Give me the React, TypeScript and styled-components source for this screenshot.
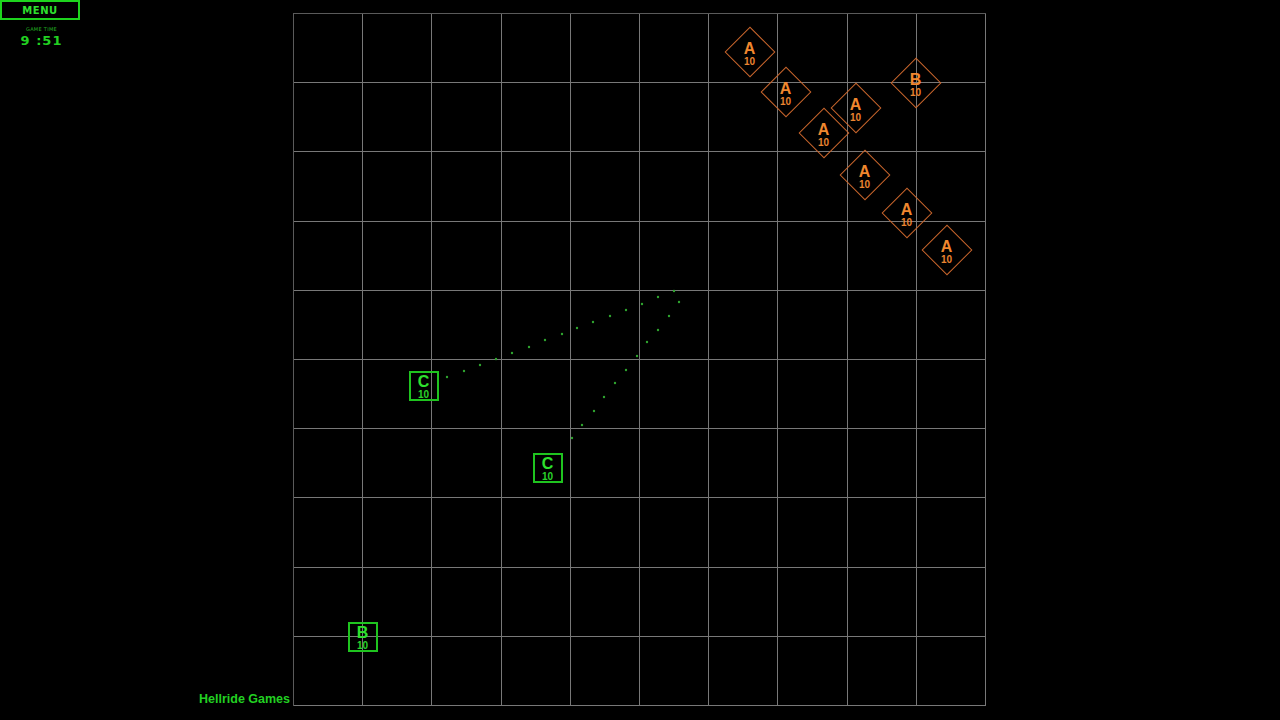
import React from "react";
import styled, { createGlobalStyle } from "styled-components";

const Global = createGlobalStyle`
  html, body { margin: 0; padding: 0; background: #000; }
  body { width: 1280px; height: 720px; overflow: hidden; font-family: "Liberation Sans", Arial, sans-serif; }
`;

const Page = styled.div`
  width: 1280px;
  height: 720px;
  display: flex;
  background: #000;
`;

const SideColumn = styled.div`
  width: 293px;
  display: flex;
  flex-direction: column;
  justify-content: space-between;
  padding-bottom: 14px;
  box-sizing: border-box;
`;

const Hud = styled.div`
  width: 80px;
  display: flex;
  flex-direction: column;
  align-items: center;
`;

const MenuButton = styled.button`
  width: 80px;
  height: 20px;
  box-sizing: border-box;
  border: 2px solid #1ed41e;
  background: #000;
  color: #2fe02f;
  font-family: "DejaVu Sans", sans-serif;
  font-size: 10px;
  font-weight: bold;
  letter-spacing: 0.5px;
  padding: 0;
  line-height: 15px;
  cursor: pointer;
  align-self: flex-start;
`;

const TimeLabel = styled.div`
  margin-top: 6px;
  margin-left: 3px;
  color: #22b022;
  font-size: 5px;
  letter-spacing: 0.3px;
  line-height: 6px;
  font-family: "DejaVu Sans", sans-serif;
`;

const TimeValue = styled.div`
  margin-top: 1px;
  margin-left: 3px;
  color: #22d022;
  font-size: 13px;
  font-weight: bold;
  letter-spacing: 1px;
  font-family: "DejaVu Sans", sans-serif;
`;

const Credit = styled.div`
  align-self: flex-end;
  margin-right: 3px;
  color: #22d022;
  font-size: 12.5px;
  font-weight: bold;
`;

const BoardWrap = styled.div`
  padding-top: 13px;
`;

const Board = styled.div`
  position: relative;
  width: 693px;
  height: 693px;
  box-sizing: border-box;
  border-left: 1.5px solid #5a5a5a;
  border-top: 1.5px solid #5a5a5a;
  display: grid;
  grid-template-columns: repeat(10, 1fr);
  grid-template-rows: repeat(10, 1fr);
`;

const Cell = styled.div`
  border-right: 1.5px solid #787878;
  border-bottom: 1.5px solid #787878;
`;

const Overlay = styled.svg`
  position: absolute;
  left: -1.5px;
  top: -1.5px;
  width: 693px;
  height: 693px;
  pointer-events: none;
`;

const EnemyUnit = styled.div<{ $x: number; $y: number }>`
  position: absolute;
  left: ${(p) => p.$x - 18}px;
  top: ${(p) => p.$y - 18}px;
  width: 36px;
  height: 36px;
  box-sizing: border-box;
  padding-top: 4px;
  display: flex;
  flex-direction: column;
  align-items: center;
  justify-content: center;
  &::before {
    content: "";
    position: absolute;
    inset: 0;
    border: 1.5px solid #c9652c;
    transform: rotate(45deg);
    box-sizing: border-box;
  }
`;

const FriendlyUnit = styled.div<{ $x: number; $y: number }>`
  position: absolute;
  left: ${(p) => p.$x - 15}px;
  top: ${(p) => p.$y - 15}px;
  width: 30px;
  height: 30px;
  box-sizing: border-box;
  padding-top: 3px;
  border: 2px solid #1fc41f;
  display: flex;
  flex-direction: column;
  align-items: center;
  justify-content: center;
`;

const UnitLetter = styled.div<{ $color: string }>`
  color: ${(p) => p.$color};
  font-size: 16px;
  font-weight: bold;
  line-height: 15px;
  position: relative;
`;

const UnitStrength = styled.div<{ $color: string }>`
  color: ${(p) => p.$color};
  font-size: 10px;
  font-weight: bold;
  line-height: 11px;
  position: relative;
`;

const OX = 294.5;
const OY = 14.5;

const enemies = [
  { l: "A", x: 750, y: 52 },
  { l: "A", x: 786, y: 92 },
  { l: "A", x: 856, y: 108 },
  { l: "A", x: 824, y: 133 },
  { l: "B", x: 916, y: 83 },
  { l: "A", x: 865, y: 175 },
  { l: "A", x: 907, y: 213 },
  { l: "A", x: 947, y: 250 },
];

const friends = [
  { l: "C", x: 424, y: 386 },
  { l: "C", x: 548, y: 468 },
  { l: "B", x: 363, y: 637 },
];

const dots: [number, number][] = [
  [447, 377], [464, 371], [480, 365], [496, 359], [512, 353], [529, 347], [545, 340],
  [562, 334], [577, 328], [593, 322], [610, 316], [626, 310], [642, 304], [658, 297], [674, 291],
  [679, 302], [669, 316], [658, 330], [647, 342], [637, 356], [626, 370], [615, 383],
  [604, 397], [594, 411], [582, 425], [572, 438],
];

export default function App() {
  return (
    <Page>
      <Global />
      <SideColumn>
        <Hud>
          <MenuButton>MENU</MenuButton>
          <TimeLabel>GAME TIME</TimeLabel>
          <TimeValue>9 :51</TimeValue>
        </Hud>
        <Credit>Hellride Games</Credit>
      </SideColumn>
      <BoardWrap>
        <Board>
          {Array.from({ length: 100 }).map((_, i) => (
            <Cell key={i} />
          ))}
          <Overlay viewBox="0 0 693 693">
            {dots.map(([x, y], i) => (
              <circle key={i} cx={x - 293} cy={y - 13} r={1.2} fill="#2fa42f" />
            ))}
          </Overlay>
          {enemies.map((u, i) => (
            <EnemyUnit key={i} $x={u.x - OX} $y={u.y - OY}>
              <UnitLetter $color="#f0872e">{u.l}</UnitLetter>
              <UnitStrength $color="#ea8430">10</UnitStrength>
            </EnemyUnit>
          ))}
          {friends.map((u, i) => (
            <FriendlyUnit key={i} $x={u.x - OX} $y={u.y - OY}>
              <UnitLetter $color="#2ee02e">{u.l}</UnitLetter>
              <UnitStrength $color="#2ad42a">10</UnitStrength>
            </FriendlyUnit>
          ))}
        </Board>
      </BoardWrap>
    </Page>
  );
}
